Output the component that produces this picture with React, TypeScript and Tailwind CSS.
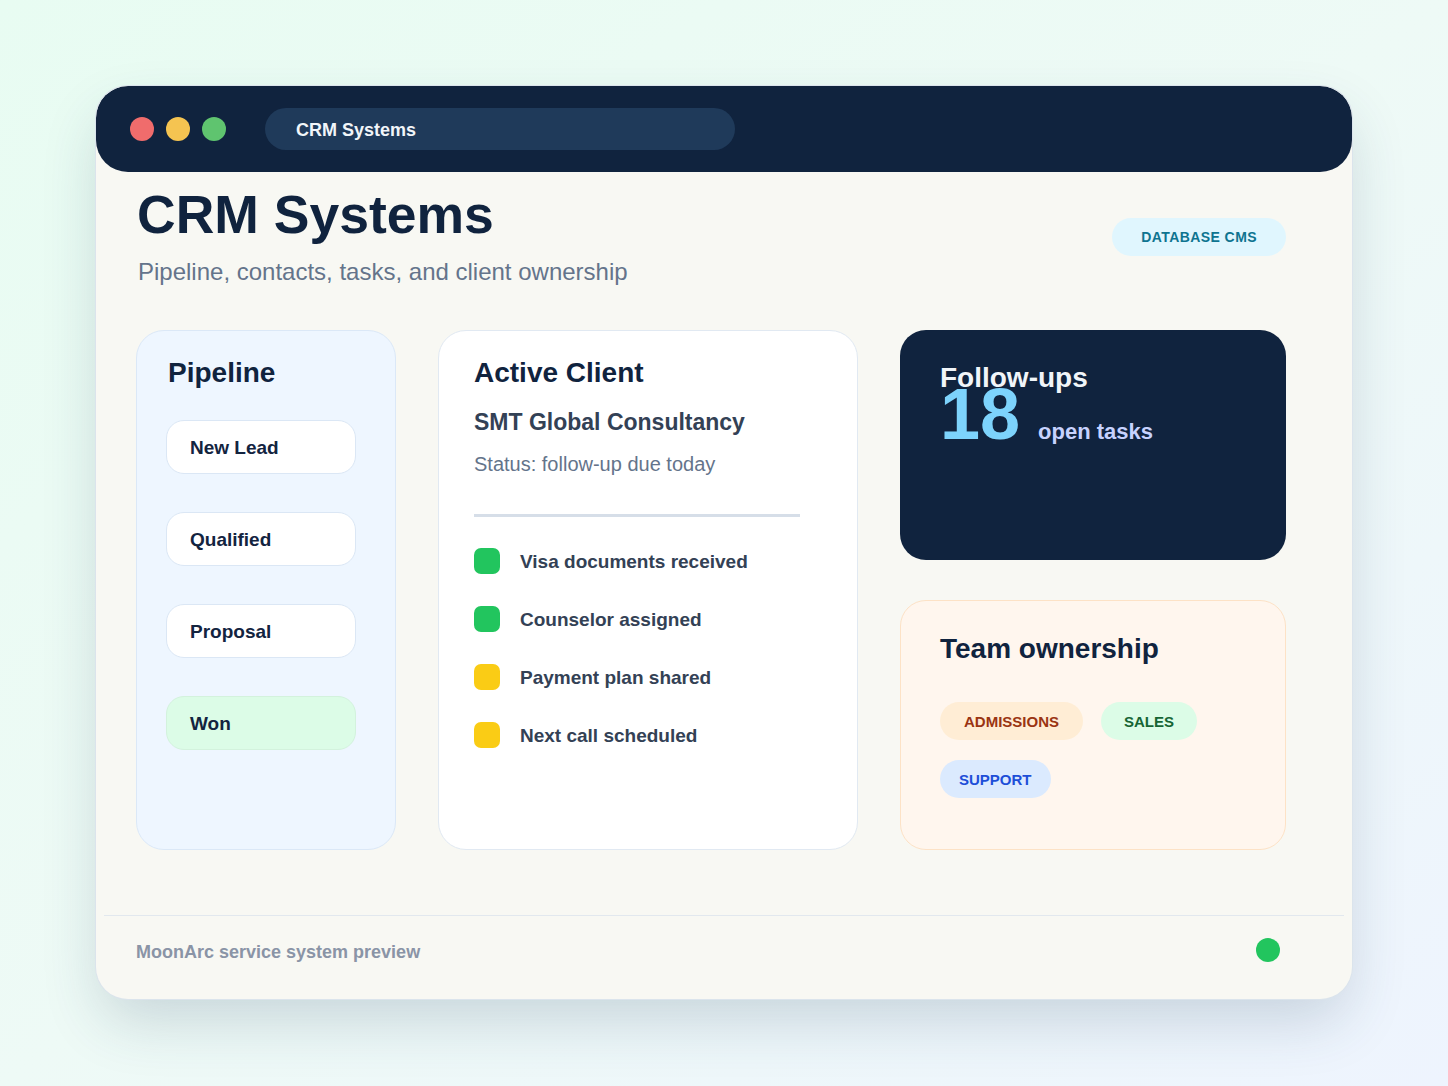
import React from "react";

type Step = { label: string; won?: boolean };
type Task = { label: string; done: boolean };
type Team = { label: string; className: string };

const steps: Step[] = [
  { label: "New Lead" },
  { label: "Qualified" },
  { label: "Proposal" },
  { label: "Won", won: true },
];

const tasks: Task[] = [
  { label: "Visa documents received", done: true },
  { label: "Counselor assigned", done: true },
  { label: "Payment plan shared", done: false },
  { label: "Next call scheduled", done: false },
];

// padding differs a little per chip in the mock
const teams: Team[] = [
  { label: "ADMISSIONS", className: "bg-[#ffedd5] text-[#9a3412] px-[24px]" },
  { label: "SALES", className: "bg-[#dcfce7] text-[#166534] px-[23px]" },
  { label: "SUPPORT", className: "bg-[#dbeafe] text-[#1d4ed8] px-[19px]" },
];

function TitleBar() {
  return (
    <div className="flex h-[86px] items-center rounded-[32px] bg-[#10233e] pl-[34px]">
      <div className="flex gap-3">
        <span className="h-6 w-6 rounded-full bg-[#f06c6c]" />
        <span className="h-6 w-6 rounded-full bg-[#f5c451]" />
        <span className="h-6 w-6 rounded-full bg-[#5fc46f]" />
      </div>
      <div className="ml-[39px] flex h-[42px] w-[470px] items-center rounded-full bg-[#1f3a5a] pl-[31px]">
        <span className="pt-[1px] text-[18px] font-bold leading-none text-[#f1f5f9]">CRM Systems</span>
      </div>
    </div>
  );
}

function PipelineCard() {
  return (
    <div className="h-[520px] w-[260px] shrink-0 rounded-[28px] border border-[#dbe8f7] bg-[#eef6ff] px-[29px] pt-[28px]">
      <h2 className="pl-[2px] text-[28px] font-bold leading-none text-[#10233e]">Pipeline</h2>
      <div className="mt-[33px] flex flex-col gap-[38px]">
        {steps.map((s) => (
          <div
            key={s.label}
            className={
              s.won
                ? "flex h-[54px] w-[190px] items-center rounded-[18px] border border-[#d3f2dd] bg-[#dcfce7] pl-[23px]"
                : "flex h-[54px] w-[190px] items-center rounded-[18px] border border-[#dbe7f5] bg-white pl-[23px]"
            }
          >
            <span className="pt-[1px] text-[19px] font-bold leading-none text-[#13243f]">{s.label}</span>
          </div>
        ))}
      </div>
    </div>
  );
}

function ClientCard() {
  return (
    <div className="h-[520px] w-[420px] shrink-0 rounded-[28px] border border-[#e1e9f2] bg-white pl-[35px] pt-[28px]">
      <h2 className="text-[28px] font-bold leading-none text-[#10233e]">Active Client</h2>
      <p className="mt-[24px] text-[23px] font-bold leading-none text-[#334155]">SMT Global Consultancy</p>
      <p className="mt-[20px] text-[20px] leading-none text-[#64748b]">Status: follow-up due today</p>
      <div className="mt-[40px] h-[3px] w-[326px] bg-[#d6dee8]" />
      <ul className="mt-[31px] flex flex-col gap-[32px]">
        {tasks.map((t) => (
          <li key={t.label} className="flex h-[26px] items-center gap-5">
            <span className={t.done ? "h-[26px] w-[26px] rounded-[7px] bg-[#22c55e]" : "h-[26px] w-[26px] rounded-[7px] bg-[#facc15]"} />
            <span className="pt-[1px] text-[19px] font-bold leading-none text-[#334155]">{t.label}</span>
          </li>
        ))}
      </ul>
    </div>
  );
}

function FollowUpsCard() {
  return (
    <div className="h-[230px] rounded-[26px] bg-[#10233e] pl-[40px] pt-[34px]">
      <h2 className="text-[28px] font-bold leading-none text-[#f1f5f9]">Follow-ups</h2>
      <div className="-mt-[14px] flex items-baseline gap-[18px]">
        <span className="text-[72px] font-bold leading-none text-[#7dd3fc]">18</span>
        <span className="text-[22px] font-bold leading-none text-[#c7d2fe]">open tasks</span>
      </div>
    </div>
  );
}

function TeamCard() {
  return (
    <div className="h-[250px] rounded-[26px] border border-[#fde2c6] bg-[#fff6ee] pl-[39px] pt-[34px]">
      <h2 className="text-[28px] font-bold leading-none text-[#10233e]">Team ownership</h2>
      <div className="mt-[39px] flex w-[280px] flex-wrap gap-x-[18px] gap-y-[20px]">
        {teams.map((t) => (
          <span
            key={t.label}
            className={`flex h-[38px] items-center rounded-full text-[15px] font-bold leading-none ${t.className}`}
          >
            {t.label}
          </span>
        ))}
      </div>
    </div>
  );
}

export default function App() {
  return (
    <div className="min-h-[1086px] bg-gradient-to-br from-[#e8fcf2] via-[#eefaf6] to-[#eef4fe] pl-[96px] pt-[86px] font-['Liberation_Sans',Arial,sans-serif]">
      <div className="w-[1256px] overflow-hidden rounded-[32px] bg-[#f8f8f3] shadow-[0_0_0_1px_#dbe4ec,0_26px_60px_-6px_rgba(40,70,100,0.2)]">
        <TitleBar />

        {/* Header */}
        <div className="flex items-start justify-between pl-[41px] pr-[66px] pt-[16px]">
          <div>
            <h1 className="text-[53.5px] font-bold leading-[53px] text-[#10233e]">CRM Systems</h1>
            <p className="mt-[19px] pl-[1px] text-[24px] leading-none text-[#64748b]">
              Pipeline, contacts, tasks, and client ownership
            </p>
          </div>
          <span className="mt-[30px] flex h-[38px] items-center rounded-full bg-[#e0f6fe] px-[29px] text-[14px] font-bold leading-none tracking-[0.03em] text-[#0e7490]">
            DATABASE CMS
          </span>
        </div>

        {/* Cards */}
        <div className="mt-[46px] flex gap-[42px] pl-[40px]">
          <PipelineCard />
          <ClientCard />
          <div className="flex w-[386px] flex-col gap-[40px]">
            <FollowUpsCard />
            <TeamCard />
          </div>
        </div>

        {/* Footer */}
        <div className="mx-2 mt-[65px] h-px bg-[#e2e8ee]" />
        <div className="mb-[37px] mt-[22px] flex h-[24px] items-center justify-between pl-[40px] pr-[72px]">
          <span className="pt-[3px] text-[18px] font-bold leading-none text-[#8a94a6]">MoonArc service system preview</span>
          <span className="h-6 w-6 rounded-full bg-[#22c55e]" />
        </div>
      </div>
    </div>
  );
}
